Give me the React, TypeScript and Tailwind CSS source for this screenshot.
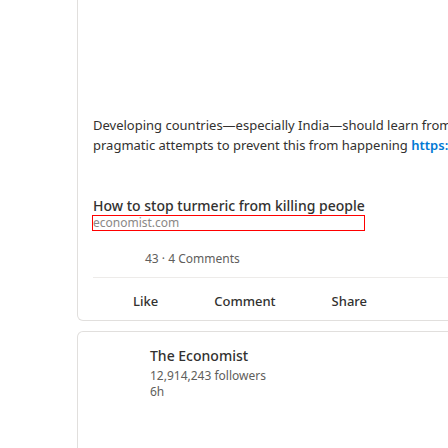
import React from "react";

const FONT = "font-['Noto_Sans','Open_Sans',sans-serif]";

function PostCard() {
  return (
    <div className="rounded-b-md border-x border-b border-[#e1dfdd] pt-[115px] pb-[9px] pl-[15px] pr-4">
      <p className="text-[13px] leading-5 font-normal text-[#323130]">
        <span className="block whitespace-nowrap">
          Developing countries—especially India—should learn from its example
        </span>
        <span className="block whitespace-nowrap">
          pragmatic attempts to prevent this from happening{" "}
          <a className="font-semibold text-[#0078d4]">https://econ.st/turmeric</a>
        </span>
      </p>

      <div className="mt-[42px] inline-flex flex-col">
        <span className="text-[14px] leading-[18px] font-medium text-[#323130]">
          How to stop turmeric from killing people
        </span>
        <span className="border border-[#ff0000] text-[12px] leading-[14px] text-[#8a8886] -ml-px">
          economist.com
        </span>
      </div>

      <div className="mt-5 pl-[52px] text-[12px] leading-4 text-[#605e5c]">
        43 · 4 Comments
      </div>

      <div className="mt-[10px] border-t border-[#edebe9]" />

      <div className="mt-[13px] flex gap-[56px] pl-[40px] text-[13px] leading-5 font-medium text-[#323130]">
        <button>Like</button>
        <button>Comment</button>
        <button>Share</button>
      </div>
    </div>
  );
}

function SourceCard() {
  return (
    <div className="mt-[10px] h-[140px] rounded-t-md border-x border-t border-[#e1dfdd] pt-[14px] pl-[72px]">
      <div className="text-[14px] leading-5 font-medium text-[#323130]">The Economist</div>
      <div className="mt-[2px] text-[12px] leading-4 text-[#605e5c]">12,914,243 followers</div>
      <div className="text-[12px] leading-4 text-[#605e5c]">6h</div>
    </div>
  );
}

export default function App() {
  return (
    <div className={`w-[448px] h-[448px] overflow-hidden bg-white ${FONT}`}>
      <div className="ml-[77px] w-[560px]">
        <PostCard />
        <SourceCard />
      </div>
    </div>
  );
}
